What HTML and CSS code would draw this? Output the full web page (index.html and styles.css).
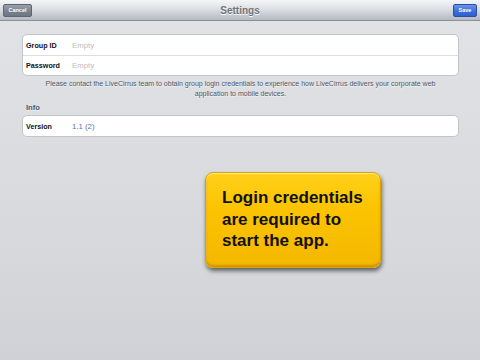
FILE: index.html
```html
<!DOCTYPE html>
<html lang="en">
<head>
    <meta charset="UTF-8">
    <meta name="viewport" content="width=device-width, initial-scale=1.0">
    <title>Settings</title>
    <link rel="stylesheet" href="styles.css">
</head>
<body>
    <div class="nav-bar">
        <div class="nav-side">
            <button class="nav-btn cancel-btn">Cancel</button>
        </div>
        <div class="nav-title">Settings</div>
        <div class="nav-side right">
            <button class="nav-btn save-btn">Save</button>
        </div>
    </div>

    <div class="settings">
        <div class="group">
            <div class="row">
                <span class="row-label">Group ID</span>
                <span class="row-value placeholder">Empty</span>
            </div>
            <div class="row">
                <span class="row-label">Password</span>
                <span class="row-value placeholder">Empty</span>
            </div>
        </div>
        <p class="group-footer">Please contact the LiveCirrus team to obtain group login credentials to experience how LiveCirrus delivers your corporate web application to mobile devices.</p>

        <div class="group-header">Info</div>
        <div class="group">
            <div class="row">
                <span class="row-label">Version</span>
                <span class="row-value info-value">1.1 (2)</span>
            </div>
        </div>
    </div>

    <div class="notice">
        Login credentials are required to start the app.
    </div>
</body>
</html>
```

FILE: styles.css
```css
* {
    margin: 0;
    padding: 0;
    box-sizing: border-box;
}

body {
    font-family: 'Liberation Sans', Arial, sans-serif;
    width: 480px;
    height: 360px;
    overflow: hidden;
    background: linear-gradient(180deg, #e1e3e7 0%, #d6d8dc 70%, #d0d1d6 100%);
    position: relative;
}

.nav-bar {
    height: 21px;
    display: grid;
    grid-template-columns: 1fr auto 1fr;
    align-items: center;
    padding: 0 3px;
    background: linear-gradient(180deg, #f5f6f8 0%, #dcdfe4 45%, #b4b9c2 100%);
    border-bottom: 1px solid #8a8f98;
}

.nav-side {
    display: flex;
}

.nav-side.right {
    justify-content: flex-end;
}

.nav-title {
    font-size: 10px;
    font-weight: bold;
    color: #6f747c;
    text-shadow: 0 1px 0 #fff;
}

.nav-btn {
    height: 13px;
    padding: 0 4px;
    border-radius: 2px;
    font-family: inherit;
    font-size: 5.5px;
    font-weight: bold;
    color: #fff;
    cursor: pointer;
}

.cancel-btn {
    width: 29px;
    background: linear-gradient(180deg, #9aa1ab 0%, #7a828d 55%, #6d7580 100%);
    border: 1px solid #5f6670;
}

.save-btn {
    width: 24px;
    background: linear-gradient(180deg, #6a95e8 0%, #3f6fd9 55%, #2f5fcc 100%);
    border: 1px solid #2a4f9e;
}

.settings {
    padding: 13px 21px 0 22px;
}

.group {
    background: #fff;
    border: 1px solid #c3c5c9;
    border-radius: 5px;
}

.row {
    height: 20px;
    display: flex;
    align-items: center;
    padding-left: 3px;
}

.row + .row {
    border-top: 1px solid #dcdde0;
}

.row-label {
    width: 46px;
    font-size: 7.2px;
    font-weight: bold;
    color: #111;
}

.row-value {
    font-size: 7.8px;
}

.placeholder {
    color: #bcbdc1;
}

.info-value {
    color: #4f79b3;
}

.group-footer {
    margin: 3px 0 0;
    padding: 0 22px;
    font-size: 7px;
    line-height: 9.5px;
    text-align: center;
    color: #4f5768;
    text-shadow: 0 1px 0 rgba(255,255,255,0.6);
}

.group-header {
    margin: 5px 0 2px 4px;
    font-size: 7.6px;
    font-weight: bold;
    line-height: 10px;
    color: #4d566c;
    text-shadow: 0 1px 0 rgba(255,255,255,0.6);
}

.notice {
    position: absolute;
    left: 205px;
    top: 172px;
    width: 176px;
    height: 96px;
    padding: 14px 10px 0 16px;
    border-radius: 8px;
    background: linear-gradient(180deg, #ffd01a 0%, #fbc300 40%, #f4b800 100%);
    border: 1px solid #d9a300;
    box-shadow: inset 0 1px 1px rgba(255,255,255,0.6), inset 0 -2px 2px rgba(170,110,0,0.5), 1px 3px 4px rgba(0,0,0,0.55);
    font-size: 17px;
    font-weight: bold;
    line-height: 21.5px;
    color: #111;
}
```
